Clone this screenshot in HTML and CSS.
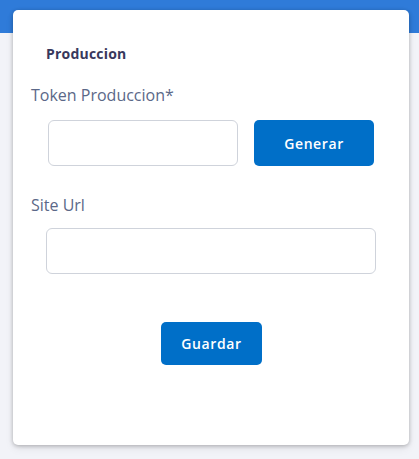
FILE: index.html
```html
<!DOCTYPE html>
<html lang="es">
<head>
<meta charset="utf-8">
<title>Produccion</title>
<link rel="stylesheet" href="styles.css">
</head>
<body>
<div class="card">
  <h2 class="title">Produccion</h2>
  <label class="label label-token">Token Produccion*</label>
  <div class="token-row">
    <input class="input input-token" type="text">
    <button class="btn btn-generar" type="button">Generar</button>
  </div>
  <label class="label label-site">Site Url</label>
  <div class="site-row">
    <input class="input input-site" type="text">
  </div>
  <div class="actions">
    <button class="btn btn-guardar" type="button">Guardar</button>
  </div>
</div>
</body>
</html>
```
FILE: styles.css
```css
html, body {
  margin: 0;
  padding: 0;
}
body {
  width: 419px;
  height: 459px;
  overflow: hidden;
  font-family: "Open Sans", "Noto Sans", sans-serif;
  background: linear-gradient(#2f7bd9 0, #2f7bd9 33px, #f2f3f8 33px, #f2f3f8 100%);
}
.card {
  box-sizing: border-box;
  margin: 10px 0 0 13px;
  width: 396px;
  height: 435px;
  background: #ffffff;
  border-radius: 5px;
  box-shadow: 0 1px 4px rgba(0, 0, 0, 0.28), 0 4px 10px rgba(0, 0, 0, 0.06);
  padding-top: 34px;
  display: flex;
  flex-direction: column;
}
.title {
  margin: 0 0 0 33px;
  font-size: 14px;
  line-height: 20px;
  font-weight: 700;
  letter-spacing: 0.2px;
  color: #38385c;
}
.label {
  display: block;
  margin-left: 18px;
  font-size: 16px;
  line-height: 24px;
  color: #5b6888;
}
.label-token {
  margin-top: 19px;
}
.token-row {
  display: flex;
  gap: 16px;
  margin: 13px 0 0 35px;
}
.input {
  box-sizing: border-box;
  height: 46px;
  border: 1px solid #cfd3db;
  border-radius: 6px;
  background: #fff;
  padding: 0 12px;
  font: inherit;
  outline: none;
}
.input-token {
  width: 190px;
}
.btn {
  box-sizing: border-box;
  border: 0;
  border-radius: 5px;
  background: #006fc8;
  color: #ffffff;
  font-family: "Open Sans", "Noto Sans", sans-serif;
  font-weight: 600;
  font-size: 14px;
  letter-spacing: 0.6px;
  padding: 0;
  cursor: pointer;
}
.btn-generar {
  width: 120px;
  height: 46px;
}
.label-site {
  margin-top: 27px;
}
.site-row {
  margin: 11px 0 0 33px;
}
.input-site {
  width: 330px;
}
.actions {
  display: flex;
  justify-content: center;
  margin-top: 48px;
  padding-left: 1px;
}
.btn-guardar {
  width: 101px;
  height: 43px;
}
```
